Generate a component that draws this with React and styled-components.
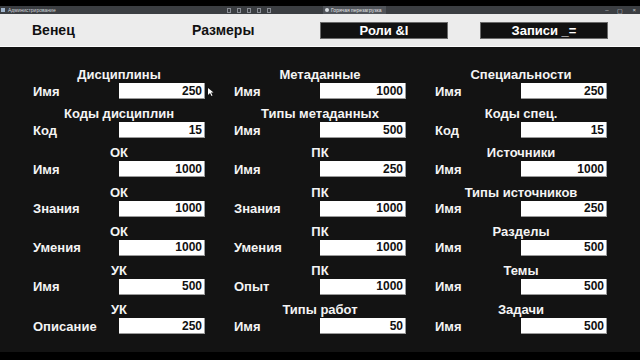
import React from 'react';
import styled, { createGlobalStyle } from 'styled-components';

const GlobalStyle = createGlobalStyle`
  html, body {
    margin: 0;
    padding: 0;
    background: #000;
  }
  body {
    font-family: "Liberation Sans", Arial, sans-serif;
    overflow: hidden;
  }
`;

const Screen = styled.div`
  width: 640px;
  height: 360px;
  display: flex;
  flex-direction: column;
  background: #000;
  position: relative;
`;

const TitleBar = styled.div`
  margin-top: 6px;
  height: 8px;
  background: #3b3e42;
  display: flex;
  align-items: center;
  font-size: 5px;
  color: #cfd3d8;
  white-space: nowrap;
`;

const AppIcon = styled.span`
  width: 4px;
  height: 4px;
  margin: 0 3px 0 1px;
  background: #9fb4cc;
`;

const TitleText = styled.span`
  width: 216px;
`;

const DebugTools = styled.div`
  display: flex;
  gap: 6px;
  margin-left: 3px;
  width: 96px;
`;

const ToolGlyph = styled.span`
  width: 4px;
  height: 5px;
  border: 1px solid #8a8e96;
  box-sizing: border-box;
`;

const Tab = styled.div`
  display: flex;
  align-items: center;
  gap: 2px;
  height: 8px;
  padding: 0 4px 0 2px;
  background: #50545a;
  color: #e4e6e8;
`;

const TabDot = styled.span`
  width: 4px;
  height: 4px;
  border-radius: 50%;
  background: #d8dde2;
`;

const WindowControls = styled.div`
  margin-left: auto;
  display: flex;
  gap: 9px;
  padding-right: 4px;
  color: #c8ccd0;
  font-size: 6px;
`;

const Toolbar = styled.div`
  height: 32px;
  background: #ececec;
  border-bottom: 1px solid #fbfbfb;
  display: flex;
  align-items: center;
  gap: 32px;
  padding-left: 32px;
`;

const NavLabel = styled.div`
  width: ${p => p.$w}px;
  font-size: 14px;
  font-weight: bold;
  color: #111;
`;

const NavButton = styled.button`
  width: 128px;
  height: 17px;
  padding: 0;
  background: #121212;
  border: 1px solid #6a6a6a;
  color: #fff;
  font-family: "Liberation Sans", Arial, sans-serif;
  font-size: 13px;
  font-weight: bold;
  line-height: 15px;
  text-align: center;
`;

const Main = styled.div`
  height: 305px;
  box-sizing: border-box;
  background: #131313;
  padding: 20px 0 0 33px;
  display: grid;
  grid-template-columns: repeat(3, 172px);
  column-gap: 29px;
  align-items: start;
`;

const Column = styled.div`
  display: flex;
  flex-direction: column;
  gap: 7.2px;
`;

const Group = styled.div`
  display: flex;
  flex-direction: column;
`;

const GroupTitle = styled.div`
  color: #f4f4f4;
  font-size: 13px;
  font-weight: bold;
  line-height: 15px;
  text-align: center;
  margin-bottom: 1px;
`;

const Field = styled.label`
  display: grid;
  grid-template-columns: 86px 86px;
  align-items: center;
  height: 16px;
`;

const FieldLabel = styled.span`
  color: #f4f4f4;
  font-size: 13px;
  font-weight: bold;
`;

const SizeInput = styled.input`
  width: 86px;
  height: 16px;
  box-sizing: border-box;
  margin: 0;
  padding: 0 2px 0 0;
  border: 1px solid #9a9a9a;
  border-width: 0 1px 1px 0;
  background: #fff;
  color: #111;
  font-family: "Liberation Sans", Arial, sans-serif;
  font-size: 12px;
  font-weight: bold;
  text-align: right;
  outline: none;
`;

const Pointer = styled.svg`
  position: absolute;
  left: 208px;
  top: 88px;
`;

const columns = [
  [
    ['Дисциплины', 'Имя', 250],
    ['Коды дисциплин', 'Код', 15],
    ['ОК', 'Имя', 1000],
    ['ОК', 'Знания', 1000],
    ['ОК', 'Умения', 1000],
    ['УК', 'Имя', 500],
    ['УК', 'Описание', 250],
  ],
  [
    ['Метаданные', 'Имя', 1000],
    ['Типы метаданных', 'Имя', 500],
    ['ПК', 'Имя', 250],
    ['ПК', 'Знания', 1000],
    ['ПК', 'Умения', 1000],
    ['ПК', 'Опыт', 1000],
    ['Типы работ', 'Имя', 50],
  ],
  [
    ['Специальности', 'Имя', 250],
    ['Коды спец.', 'Код', 15],
    ['Источники', 'Имя', 1000],
    ['Типы источников', 'Имя', 250],
    ['Разделы', 'Имя', 500],
    ['Темы', 'Имя', 500],
    ['Задачи', 'Имя', 500],
  ],
];

const SizeGroup = ({ title, label, value }) => (
  <Group>
    <GroupTitle>{title}</GroupTitle>
    <Field>
      <FieldLabel>{label}</FieldLabel>
      <SizeInput readOnly defaultValue={value} />
    </Field>
  </Group>
);

const App = () => (
  <Screen>
    <GlobalStyle />
    <TitleBar>
      <AppIcon />
      <TitleText>Администрирование</TitleText>
      <DebugTools>
        <ToolGlyph />
        <ToolGlyph />
        <ToolGlyph />
        <ToolGlyph />
        <ToolGlyph />
      </DebugTools>
      <Tab>
        <TabDot />
        Горячая перезагрузка
      </Tab>
      <WindowControls>
        <span>–</span>
        <span>▢</span>
        <span>×</span>
      </WindowControls>
    </TitleBar>
    <Toolbar>
      <NavLabel $w={128}>Венец</NavLabel>
      <NavLabel $w={96}>Размеры</NavLabel>
      <NavButton>Роли &amp;I</NavButton>
      <NavButton>Записи _=</NavButton>
    </Toolbar>
    <Main>
      {columns.map((col, i) => (
        <Column key={i}>
          {col.map(([title, label, value], j) => (
            <SizeGroup key={j} title={title} label={label} value={value} />
          ))}
        </Column>
      ))}
    </Main>
    <Pointer width="6" height="8" viewBox="0 0 6 8">
      <path d="M0 0 L0 7 L2 5 L3.5 8 L4.5 7.5 L3 4.5 L5.5 4.5 Z" fill="#fff" />
    </Pointer>
  </Screen>
);

export default App;
